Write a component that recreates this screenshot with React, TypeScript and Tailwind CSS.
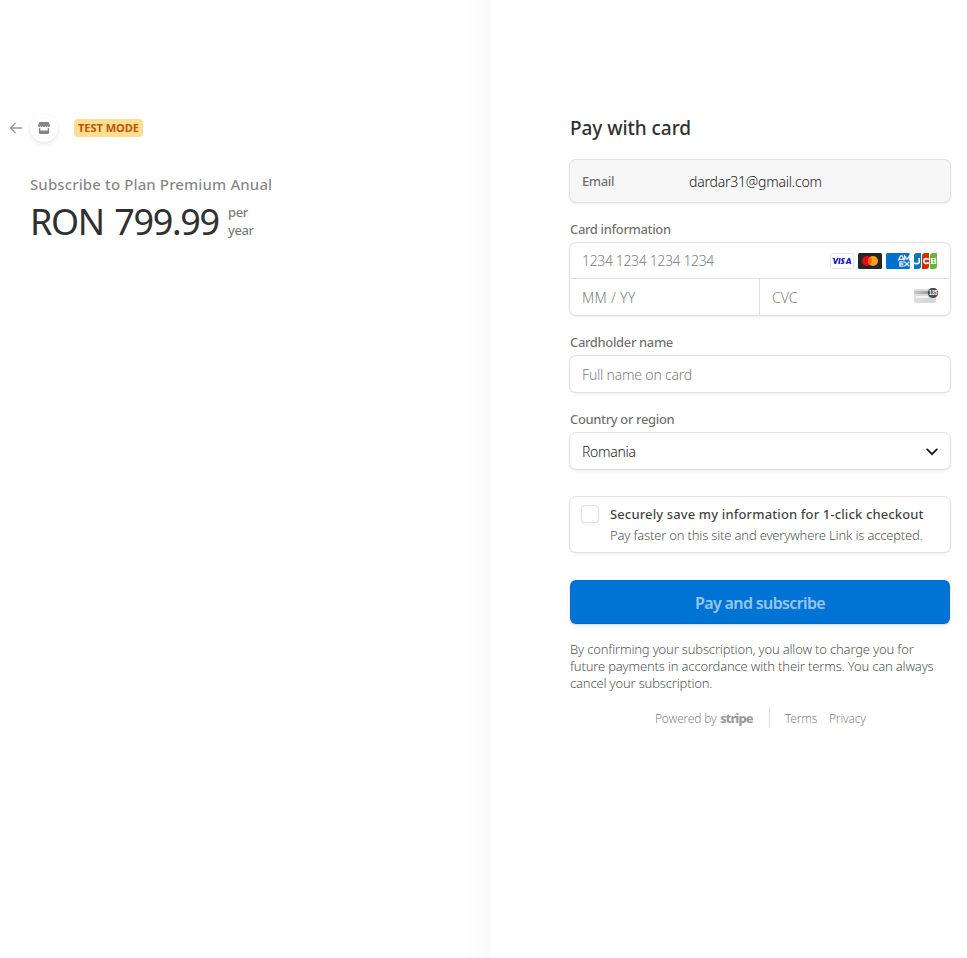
import type { ReactNode } from 'react';
import clsx from 'clsx';

const boxShadow = 'shadow-[0_0_0_1px_#e0e0e0,0_2px_4px_rgba(0,0,0,0.07),0_1px_1.5px_rgba(0,0,0,0.05)]';

function Field({ label, className, children }: { label: string; className?: string; children: ReactNode }) {
  return (
    <div className={className}>
      <label className="block h-[17px] text-[13px] leading-[17px] font-medium tracking-[-0.36px] text-[#1a1a1a]/65">
        {label}
      </label>
      <div className={clsx('mt-[5px] rounded-md bg-white', boxShadow)}>{children}</div>
    </div>
  );
}

function VisaIcon() {
  return (
    <svg width="24" height="16" viewBox="0 0 24 16">
      <rect x="0.5" y="0.5" width="23" height="15" rx="1.5" fill="#fff" stroke="#e2e4e8" />
      <path d="M2 5.1h2.7l.7 3.6 1.6-3.6h1.7L6 11H4.4L3.4 6.2z" fill="#171ecb" />
      <path
        d="M9.2 5.1h1.6l-1 5.9H8.2zM15 5.3l-.3 1.3c-1.2-.5-1.8-.2-1.8.2 0 .6 1.8.8 1.6 2.4-.2 1.8-2.6 2.2-4 1.6l.3-1.3c1.1.5 2 .3 2.1-.2 0-.7-1.7-.8-1.6-2.4.1-1.8 2.3-2.2 3.7-1.6zM18.3 5.1H20l1.4 5.9h-1.5l-.2-.8h-2.1l-.5.8h-1.7zm.6 2-1 2h1.5z"
        fill="#171ecb"
      />
    </svg>
  );
}

function MastercardIcon() {
  return (
    <svg width="24" height="16" viewBox="0 0 24 16">
      <rect width="24" height="16" rx="1.5" fill="#252525" />
      <circle cx="9" cy="8" r="5" fill="#eb001b" />
      <circle cx="15" cy="8" r="5" fill="#f79e1b" />
      <path d="M12 4a5 5 0 0 1 0 8 5 5 0 0 1 0-8z" fill="#ff5f00" />
    </svg>
  );
}

function AmexIcon() {
  return (
    <svg width="24" height="16" viewBox="0 0 24 16" fill="none">
      <rect width="24" height="16" rx="1.5" fill="#016fd0" />
      <path
        d="M12.3 7.6 14.6 2.8h1.6l2 4.8M13.5 6.3h3.6M18.6 7.6V2.9l2.4 3.3 2.4-3.3v4.7M13.9 8.8v4.4M13.4 8.9h4.4M13.4 11h4M13.4 13.1h4.4M18.4 8.7l5 4.6M23.4 8.7l-5 4.6"
        stroke="#fff"
        strokeOpacity="0.9"
        strokeWidth="1.3"
      />
    </svg>
  );
}

function JcbIcon() {
  return (
    <svg width="24" height="16" viewBox="0 0 24 16" fill="none">
      <path d="M3 0h4v13a3 3 0 0 1-3 3H0V3a3 3 0 0 1 3-3z" fill="#047ab1" />
      <path d="M11 0h4v13a3 3 0 0 1-3 3H8V3a3 3 0 0 1 3-3z" fill="#d42d06" />
      <path d="M19 0h4v13a3 3 0 0 1-3 3h-4V3a3 3 0 0 1 3-3z" fill="#67b637" />
      <path d="M5.2 5v4c0 2-3.1 2-5.2 1.1M14.8 6.2c-3-1-5-.5-5 1.8s2 2.8 5 1.8" stroke="#fff" strokeWidth="1.7" />
      <path
        d="M17 5h3.5c2.2 0 2.2 2.5.6 2.9 2 .4 1.9 3.1-.6 3.1H17zm1.6 1v1.4H20c1 0 1-1.4 0-1.4zm0 2.5V10h1.6c1 0 1-1.5 0-1.5z"
        fill="#fff"
      />
    </svg>
  );
}

function CvcIcon() {
  return (
    <svg width="26" height="18" viewBox="0 0 26 18">
      <defs>
        <linearGradient id="cvc" x1="0" x2="1">
          <stop offset="0" stopColor="#dedede" />
          <stop offset="1" stopColor="#d4d4d4" />
        </linearGradient>
        <linearGradient id="stripe" x1="0" x2="1">
          <stop offset="0" stopColor="#c9c9c9" />
          <stop offset="1" stopColor="#858585" />
        </linearGradient>
      </defs>
      <rect y="1" width="22" height="14" rx="2" fill="url(#cvc)" />
      <rect y="3" width="22" height="3" fill="url(#stripe)" />
      <rect x="2" y="8" width="12" height="2" fill="#f5f5f5" />
      <circle cx="19" cy="4.9" r="5.2" fill="#4c4c4c" />
      <text
        x="19.1"
        y="7.3"
        textAnchor="middle"
        textLength="8.4"
        lengthAdjust="spacingAndGlyphs"
        className="fill-white font-['Liberation_Sans',sans-serif] text-[7px] font-bold"
      >
        135
      </text>
    </svg>
  );
}

function OrderSummary() {
  return (
    <section className="flex w-[490px] flex-col bg-[linear-gradient(to_right,#fff_460px,#fdfdfd_478px,#f9f9f9_490px)] pt-[114px]">
      <header className="flex h-7 items-center pl-[9px]">
        <svg width="13" height="12" viewBox="0 0 13 12" fill="none" stroke="#999" strokeWidth="1.3">
          <path d="M13 6H1.7M6.5 1l-5 5 5 5" />
        </svg>
        <div className="ml-2 flex size-7 items-center justify-center rounded-full bg-white shadow-[0_2px_5px_rgba(0,0,0,0.1),0_0_1px_rgba(0,0,0,0.04)]">
          <svg width="12" height="12" viewBox="0 0 12 12" fill="#858585">
            <path d="M1.5 0h9L12 3.2c0 2-1.8 2.2-2.4 1.1-.7 1.1-1.8 1.1-2.4 0-.6 1.1-1.8 1.1-2.4 0-.6 1.1-1.8 1.1-2.4 0C1.8 5.4 0 5.2 0 3.2z" />
            <path d="M1 5.8h1.3v2.7h7.4V5.8H11V11a1 1 0 0 1-1 1H2a1 1 0 0 1-1-1z" />
          </svg>
        </div>
        <span className="ml-4 h-[18px] w-[69px] rounded bg-[#ffde92] text-center text-[11px] leading-[18px] font-bold whitespace-nowrap text-[#bb5504]">
          TEST MODE
        </span>
      </header>
      <div className="pl-[30px]">
        <h1 className="mt-[30px] text-[15px] leading-6 font-medium whitespace-nowrap text-[#1a1a1a]/55">
          <span className="tracking-[0.12px]">Subscribe to Plan Premium Anual</span>
        </h1>
        <div className="mt-1 flex">
          <span className="w-[198px] pt-px text-[36px] leading-[42px] font-[450] tracking-[-1.35px] whitespace-nowrap text-[#303030] [word-spacing:2.5px]">
            RON 799.99
          </span>
          <span className="pt-[3px] text-[13px] leading-[18px] font-medium tracking-[-0.4px] text-[#1a1a1a]/60">
            per
            <br />
            year
          </span>
        </div>
      </div>
    </section>
  );
}

function PaymentForm() {
  return (
    <main className="w-[460px] pt-[116px] pl-20">
      <h2 className="text-[19px] leading-6 font-medium text-[#303030]">
        <span className="tracking-[-0.05px]">Pay with card</span>
      </h2>
      <div className={clsx('mt-5 flex h-[42px] items-center rounded-md bg-[#f7f7f7] px-3 pt-0.5', boxShadow)}>
        <span className="w-[107px] text-[13px] font-medium tracking-[-0.4px] text-[#1a1a1a]/65">Email</span>
        <span className="text-sm font-light tracking-[-0.22px] text-[#1a1a1a]">dardar31@gmail.com</span>
      </div>

      <Field label="Card information" className="mt-[19px]">
        <div className="flex h-9 items-center justify-between border-b border-[#e0e0e0] px-3 pt-px">
          <span className="text-sm font-light tracking-[-0.36px] text-[#808080]">1234 1234 1234 1234</span>
          <div className="flex gap-1">
            <VisaIcon />
            <MastercardIcon />
            <AmexIcon />
            <JcbIcon />
          </div>
        </div>
        <div className="flex h-9 text-sm font-light text-[#808080]">
          <span className="flex w-[190px] items-center border-r border-[#e0e0e0] pt-px pl-3 tracking-[0.3px]">MM / YY</span>
          <div className="flex flex-1 items-center justify-between pr-2.5 pl-3">
            <span className="pt-px">CVC</span>
            <div className="pb-px">
              <CvcIcon />
            </div>
          </div>
        </div>
      </Field>

      <Field label="Cardholder name" className="mt-[19px]">
        <div className="flex h-9 items-center px-3 pt-px text-sm font-light tracking-[-0.2px] text-[#808080]">
          Full name on card
        </div>
      </Field>

      <Field label="Country or region" className="mt-[19px]">
        <div className="flex h-9 items-center justify-between px-3 pt-px text-sm font-light tracking-[-0.3px] text-[#1a1a1a]">
          <span className="pt-px">Romania</span>
          <svg width="12" height="8" viewBox="0 0 12 8" fill="none" stroke="#1a1a1a" strokeWidth="1.9" strokeLinecap="round">
            <path d="m1.2 1.4 4.8 4.8 4.8-4.8" />
          </svg>
        </div>
      </Field>

      <div className={clsx('mt-7 flex h-[55px] rounded-md bg-white pt-2 pl-3', boxShadow)}>
        <div className="mt-px size-4 rounded-[3px] shadow-[0_0_0_1px_#e0e0e0,0_2px_4px_rgba(0,0,0,0.07)]" />
        <div className="ml-3 whitespace-nowrap">
          <p className="text-[13px] leading-[18px] font-[550] text-[#1a1a1a]/85">
            <span className="tracking-[0.13px]">Securely save my information for 1-click checkout</span>
          </p>
          <p className="mt-[3px] text-[13px] leading-[18px] font-light text-[#1a1a1a]/80">
            <span className="tracking-[-0.18px]">Pay faster on this site and everywhere Link is accepted.</span>
          </p>
        </div>
      </div>

      <button className="mt-7 block h-11 w-full rounded-md bg-[#0074d4] pt-px text-base font-semibold text-white/60 shadow-[inset_0_0_0_1px_rgba(50,50,93,0.1),0_2px_5px_rgba(50,50,93,0.1),0_1px_1px_rgba(0,0,0,0.07)]">
        <span className="tracking-[-0.63px]">Pay and subscribe</span>
      </button>

      <p className="mt-[17px] text-[13px] leading-[17px] font-light tracking-[-0.17px] whitespace-nowrap text-[#1a1a1a]/80">
        By confirming your subscription, you allow to charge you for
        <br />
        future payments in accordance with their terms. You can always
        <br />
        cancel your subscription.
      </p>

      <footer className="mt-[15px] flex h-[21px] items-center pl-[85px] text-xs font-light tracking-[-0.2px] whitespace-nowrap text-[#1a1a1a]/60">
        <span className="w-[65px] pt-0.5">Powered by</span>
        <span className="w-[49px] pt-0.5 text-[13px] font-extrabold tracking-[-1px] text-[#1a1a1a]/45">stripe</span>
        <span className="h-full w-4 border-l border-[#e0e0e0]" />
        <span className="w-11 pt-0.5">Terms</span>
        <span className="pt-0.5">Privacy</span>
      </footer>
    </main>
  );
}

export default function App() {
  return (
    <div className="flex h-[958px] w-[967px] overflow-hidden bg-white font-['Noto_Sans',sans-serif]">
      <OrderSummary />
      <PaymentForm />
    </div>
  );
}
